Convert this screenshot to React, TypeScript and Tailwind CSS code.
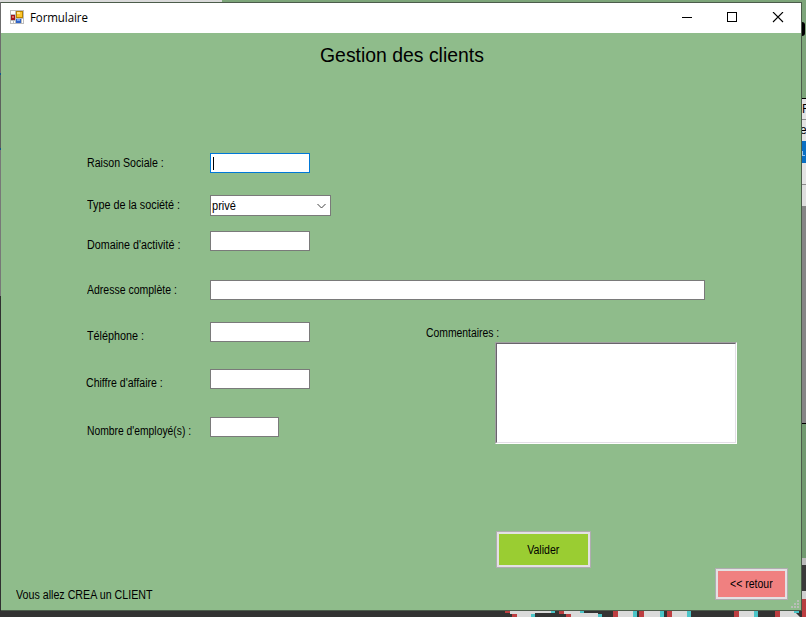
import type { ReactNode } from "react";

const fontStack = "font-['Liberation_Sans',Arial,sans-serif]";

function Txt({ className = "", children }: { className?: string; children: ReactNode }) {
  return (
    <div className={`w-max whitespace-pre text-[12px] leading-[14px] text-black ${className}`}>
      {children}
    </div>
  );
}

function FormIcon() {
  return (
    <svg className="mb-[2px]" width="14" height="14" viewBox="0 0 14 14" shapeRendering="crispEdges">
      <rect width="14" height="14" fill="#bdbdbd" />
      <rect x="1" y="1" width="4" height="3" fill="#fff" />
      <rect x="1" y="11" width="2" height="2" fill="#fff" />
      <rect x="4" y="11" width="1" height="2" fill="#fff" />
      <rect x="12" y="9" width="1" height="4" fill="#fff" />
      <rect x="1" y="5" width="4" height="5" fill="#a3161a" />
      <rect x="2" y="6" width="2" height="2" fill="#e06a60" />
      <rect x="6" y="1" width="7" height="7" fill="#b88200" />
      <rect x="7" y="2" width="5" height="5" fill="#fcc62c" />
      <rect x="7" y="2" width="3" height="2" fill="#ffe48a" />
      <rect x="6" y="9" width="5" height="4" fill="#3064c8" />
      <rect x="7" y="9" width="3" height="2" fill="#7ba6ee" />
    </svg>
  );
}

function TitleBar() {
  return (
    <header className="flex h-[30px] items-center bg-white pl-[9px]">
      <FormIcon />
      <span className="ml-[6px] origin-left scale-x-[0.96] whitespace-pre font-['Open_Sans','Noto_Sans',sans-serif] text-[12px] leading-[16px] tracking-[-0.1px] text-black">
        Formulaire
      </span>
      <svg className="ml-auto mr-[13px]" width="108" height="12" viewBox="0 0 108 12" fill="none" stroke="#000">
        <path d="M2 5.5h10" shapeRendering="crispEdges" />
        <path d="M47.5 0.5h9v9h-9z" shapeRendering="crispEdges" />
        <path d="M93 0l10 10M103 0l-10 10" strokeWidth="1.1" />
      </svg>
    </header>
  );
}

function Field({ className }: { className: string }) {
  return <div className={`h-[20px] shrink-0 border border-[#7a7a7a] bg-white ${className}`} />;
}

function Row({ className, label, children }: { className: string; label: ReactNode; children: ReactNode }) {
  return (
    <div className={`flex shrink-0 items-start ${className}`}>
      <div className="w-[123px] shrink-0">{label}</div>
      {children}
    </div>
  );
}

function Grip() {
  return (
    <svg width="8" height="8" viewBox="0 0 8 8" fill="#b9bdb8" shapeRendering="crispEdges">
      <path d="M6 0h2v2H6zM3 3h2v2H3zM6 3h2v2H6zM0 6h2v2H0zM3 6h2v2H3zM6 6h2v2H6z" />
    </svg>
  );
}

function FormBody() {
  return (
    <main className="flex h-[577px] flex-col bg-[#8fbc8b]">
      <h1 className="ml-[319px] mt-[10px] h-[24px] w-max origin-left scale-x-[0.97] whitespace-pre text-[20px] font-normal leading-[24px] text-black">
        Gestion des clients
      </h1>

      <section className="ml-[86px] mt-[86px] flex h-[291px] shrink-0 flex-col">
        <Row className="h-[42px]" label={<Txt className="mt-[3px] origin-left scale-x-[0.885]">Raison Sociale :</Txt>}>
          <div className="flex h-[20px] w-[100px] items-center border border-[#0078d7] bg-white pl-[2px]">
            <div className="h-[13px] w-px bg-black" />
          </div>
        </Row>
        <Row className="h-[36px]" label={<Txt className="mt-[3px] origin-left scale-x-[0.9]">Type de la société :</Txt>}>
          <div className="flex h-[21px] w-[121px] items-center border border-[#7a7a7a] bg-white pl-[1px] pr-[3px]">
            <Txt className="origin-left scale-x-[0.92]">privé</Txt>
            <svg className="ml-auto mt-[2px]" width="11" height="7" viewBox="0 0 11 7" fill="none" stroke="#444">
              <path d="M1.5 1l4 4 4-4" />
            </svg>
          </div>
        </Row>
        <Row className="h-[49px]" label={<Txt className="mt-[7px] origin-left scale-x-[0.895]">Domaine d'activité :</Txt>}>
          <Field className="w-[100px]" />
        </Row>
        <Row className="h-[42px]" label={<Txt className="mt-[3px] origin-left scale-x-[0.875]">Adresse complète :</Txt>}>
          <Field className="w-[495px]" />
        </Row>
        <div className="flex shrink-0">
          <div className="w-[339px] shrink-0">
            <Row className="h-[47px]" label={<Txt className="mt-[7px] origin-left scale-x-[0.9]">Téléphone :</Txt>}>
              <Field className="w-[100px]" />
            </Row>
            <Row className="h-[48px]" label={<Txt className="-ml-px mt-[7px] origin-left scale-x-[0.88]">Chiffre d'affaire :</Txt>}>
              <Field className="w-[100px]" />
            </Row>
            <Row className="h-[20px]" label={<Txt className="mt-[7px] origin-left scale-x-[0.86]">Nombre d'employé(s) :</Txt>}>
              <Field className="w-[69px]" />
            </Row>
          </div>
          <div className="pt-[4px]">
            <Txt className="origin-left scale-x-[0.865]">Commentaires :</Txt>
            <div className="ml-[69px] mt-[2px] h-[102px] w-[242px] border border-b-white border-l-[#a0a0a0] border-r-white border-t-[#a0a0a0]">
              <div className="h-full border border-b-[#e3dfe6] border-l-[#69646c] border-r-[#e3dfe6] border-t-[#69646c] bg-white" />
            </div>
          </div>
        </div>
      </section>

      <div className="ml-[495px] mt-[87px] h-[37px] w-[95px] shrink-0 border border-[#b0acb0] bg-[#e3e1e3] p-[2px]">
        <div className="flex h-full w-full items-center justify-center bg-[#9acd32]">
          <Txt className="scale-x-[0.88]">Valider</Txt>
        </div>
      </div>

      <footer className="flex h-[42px] shrink-0">
        <Txt className="ml-[15px] mt-[20px] origin-left scale-x-[0.89]">Vous allez CREA un CLIENT</Txt>
        <div className="ml-auto h-[32px] w-[73px] border border-[#b0acb0] bg-[#e3e1e3] p-[2px]">
          <div className="flex h-full w-full items-center justify-center bg-[#f08080]">
            <Txt className="scale-x-[0.875]">{"<< retour"}</Txt>
          </div>
        </div>
        <div className="ml-[3px] mr-[2px] mt-[32px]">
          <Grip />
        </div>
      </footer>
    </main>
  );
}

function RightEdge() {
  return (
    <div className="h-[609px] w-[4px] shrink-0 overflow-hidden text-[12px] leading-[20px] text-black">
      <div className="h-[96px] bg-[#7da57a] pt-[20px]">
        <div className="h-[14px] w-[3px] rounded-r-full bg-black" />
      </div>
      <div className="h-px bg-black" />
      <div className="h-[20px] bg-[#e3e3e3]">F</div>
      <div className="h-px bg-[#8c8c8c]" />
      <div className="h-[21px] bg-[#e3e3e3]"><span className="-ml-[2px]">e</span></div>
      <div className="h-[22px] bg-[#0a6fc2] pt-[10px]">
        <div className="h-[5px] w-[3px] border-b border-l border-[#9cc8ee]" />
      </div>
      <div className="h-[22px] border-b border-[#8c8c8c] bg-[#e3e3e3]" />
      <div className="h-[21px] bg-[#dedede]" />
      <div className="h-[217px] bg-[#858585]" />
      <div className="h-px bg-black" />
      <div className="h-[134px] bg-[#719a70]" />
      <div className="h-[7px] bg-[#b9b9b9]" />
      <div className="h-[26px] bg-[#3a3a3a]" />
      <div className="h-[8px] bg-[#cfcfcf]" />
      <div className="h-[14px] bg-[#b63e40]" />
    </div>
  );
}

export default function App() {
  return (
    <div className={`flex h-[617px] w-[806px] flex-col overflow-hidden bg-[#333333] ${fontStack}`}>
      <div className="flex h-[2px] shrink-0">
        <div className="w-[222px] bg-[#dadada]" />
        <div className="flex-1 bg-[#7da57a]" />
      </div>
      <div className="flex h-[609px] shrink-0">
        <div className="w-px shrink-0">
          <div className="h-[71px] bg-[#6c6c6c]" />
          <div className="h-[2px] bg-[#12568c]" />
          <div className="h-[73px] bg-[#5d615d]" />
          <div className="h-[2px] bg-[#12568c]" />
          <div className="h-[146px] bg-[#787878]" />
          <div className="h-[315px] bg-[#303030]" />
        </div>
        <div className="w-[801px] shrink-0 border-b border-r border-t border-[#4c5c4b]">
          <TitleBar />
          <FormBody />
        </div>
        <RightEdge />
      </div>
      <svg width="806" height="6" viewBox="0 0 806 6">
        <path
          fill="#bd3e41"
          d="M505 0h5v2h-5zM512 3h5v3h-5zM559 0h5v3h-5zM566 3h5v3h-5zM613 0h5v6h-5zM639 0h5v6h-5zM667 0h5v6h-5zM734 0h5v6h-5zM775 0h5v6h-5zM802 0h4v6h-4z"
        />
        <path
          fill="#dadada"
          d="M510 0h41v2h-16v4h-18v-3h-7zM564 0h16v2h18v4h-27v-3h-7zM618 0h15v6h-15zM644 0h16v6h-16zM672 0h15v6h-15zM739 0h15v6h-15zM780 0h14l6 6h-20z"
        />
        <path
          fill="#4bc5c8"
          d="M551 0h4v2h-4zM531 3h4v3h-4zM580 0h4v2h-4zM598 3h4v3h-4zM633 0h4v6h-4zM660 0h4v6h-4zM687 0h4v6h-4zM754 0h4v6h-4zM794 0h5v2h-5z"
        />
      </svg>
    </div>
  );
}
